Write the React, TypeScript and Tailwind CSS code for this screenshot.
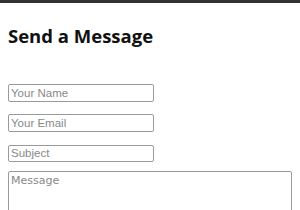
export default function App() {
  return (
    <div className="h-[210px] w-[300px] overflow-hidden bg-white">
      <div className="h-[3px] bg-[#333333]" />
      <div className="px-2 pt-[20px]">
        <h2 className="font-['Open_Sans',sans-serif] text-[18.5px] font-bold leading-[26px] text-[#111]">
          Send a Message
        </h2>
        <form className="mt-[35px] flex flex-col gap-[12px]">
          <input
            placeholder="Your Name"
            className="h-[18px] w-[146px] rounded-[2px] border border-[#9a9a9a] px-[2px] font-['Liberation_Sans',Arial,sans-serif] text-[11.5px] placeholder:text-[#888]"
          />
          <input
            placeholder="Your Email"
            className="h-[18px] w-[146px] rounded-[2px] border border-[#9a9a9a] px-[2px] font-['Liberation_Sans',Arial,sans-serif] text-[11.5px] placeholder:text-[#888]"
          />
          <input
            placeholder="Subject"
            className="mt-[1px] h-[17px] w-[146px] rounded-[2px] border border-[#9a9a9a] px-[2px] font-['Liberation_Sans',Arial,sans-serif] text-[11.5px] placeholder:text-[#888]"
          />
          <textarea
            placeholder="Message"
            className="-mt-[3px] h-[60px] w-[284px] resize-none rounded-[2px] border border-[#9a9a9a] px-[2px] py-[1px] font-['DejaVu_Sans',sans-serif] text-[11px] placeholder:text-[#888]"
          />
        </form>
      </div>
    </div>
  );
}
